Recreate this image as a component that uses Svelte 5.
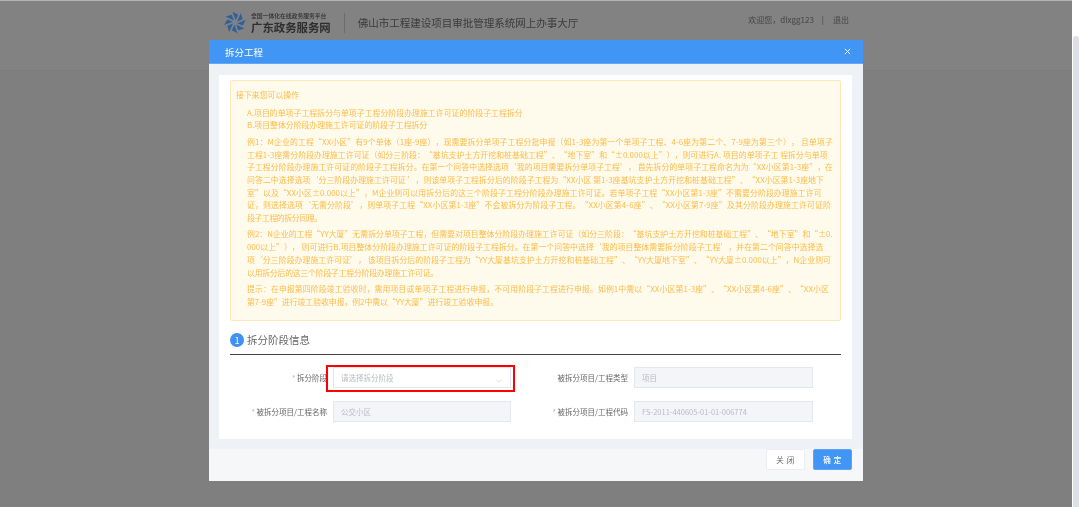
<script>
  const sections = [
    [["A.项目的单项子工程拆分与单项子工程分阶段办理施工许可证的阶段子工程拆分", 522.7], ["B.项目整体分阶段办理施工许可证的阶段子工程拆分", 427.3]],
    [
      ["例1：M企业的工程“XX小区”有9个单体（1座-9座），现需要拆分单项子工程分批申报（如1-3座为第一个单项子工程、4-6座为第二个、7-9座为第三个）， 且单项子", 833],
      ["工程1-3座需分阶段办理施工许可证（如分三阶段：“基坑支护土方开挖和桩基础工程”、“地下室”和“±0.000以上”），则可进行A. 项目的单项子工 程拆分与单项", 827.7],
      ["子工程分阶段办理施工许可证的阶段子工程拆分。在第一个问答中选择选项‘我的项目需要拆分单项子工程’， 首先拆分的单项子工程命名为为“XX小区第1-3座”，在", 833],
      ["问答二中选择选项‘分三阶段办理施工许可证 ’，则该单项子工程拆分后的阶段子工程为“XX小区 第1-3座基坑支护土方开挖和桩基础工程”、“XX小区第1-3座地下", 824],
      ["室”以及“XX小区±0.000以上”，M企业则可以用拆分后的这三个阶段子工程分阶段办理施工许可证。若单项子工程“XX小区第1-3座”不需要分阶段办理施工许可", 821.7],
      ["证，则选择选项‘无需分阶段’，则单项子工程“XX小区第1-3座”不会被拆分为阶段子工程。“XX小区第4-6座”、“XX小区第7-9座”及其分阶段办理施工许可证阶", 831],
      ["段子工程的拆分同理。", 321.7]
    ],
    [
      ["例2：N企业的工程“YY大厦”无需拆分单项子工程，但需要对项目整体分阶段办理施工许可证（如分三阶段：“基坑支护土方开挖和桩基础工程”、“地下室”和“±0.", 832.7],
      ["000以上”）， 则可进行B.项目整体分阶段办理施工许可证的阶段子工程拆分。在第一个问答中选择‘我的项目整体需要拆分阶段子工程’，并在第二个问答中选择选", 823.3],
      ["项‘分三阶段办理施工许可证’， 该项目拆分后的阶段子工程为“YY大厦基坑支护土方开挖和桩基础工程”、“YY大厦地下室”、“YY大厦±0.000以上”，N企业则可", 831],
      ["以用拆分后的这三个阶段子工程分阶段办理施工许可证。", 438]
    ],
    [
      ["提示：在申报第四阶段竣工验收时，需用项目或单项子工程进行申报，不可用阶段子工程进行申报。如例1中需以“XX小区第1-3座”、“XX小区第4-6座”、“XX小区", 829],
      ["第7-9座”进行竣工验收申报，例2中需以“YY大厦”进行竣工验收申报。", 498]
    ]
  ];
  const blades = [0, 45, 90, 135, 180, 225, 270, 315];

  // Text runs end where the source layout ended them: spread the small difference over the line.
  function fit(node, rightEdge) {
    const width = rightEdge - 247;
    const actual = node.getBoundingClientRect().width;
    node.style.letterSpacing = (width - actual) / node.textContent.length + "px";
  }
</script>

<div class="screen">
  <div class="page">
    <header class="topbar">
      <div class="brand">
        <svg class="logo" viewBox="0 0 24 24" width="22" height="23" aria-hidden="true">
          {#each blades as a}
            <path d="M12.7 9.6 9.3 .2 15.4 3.6Z" fill="#2e6199" transform="rotate({a} 12 12)" />
          {/each}
          <circle cx="12" cy="12" r="1.2" fill="#5d86b4" />
        </svg>
        <div class="brand-text">
          <span class="brand-sub">全国一体化在线政务服务平台</span>
          <span class="brand-main">广东政务服务网</span>
        </div>
        <i class="divider"></i>
        <span class="hall">佛山市工程建设项目审批管理系统网上办事大厅</span>
      </div>
      <div class="user">
        <span>欢迎您，dlxgg123</span><span class="sep">|</span><span>退出</span>
      </div>
    </header>
  </div>
  <aside class="track"><div class="thumb"></div></aside>

  <div class="modal">
    <div class="modal-head">
      <span>拆分工程</span>
      <svg viewBox="0 0 8 8" width="7" height="7" aria-hidden="true"><path d="M1 1 7 7M7 1 1 7" stroke="#fff" stroke-width="1.1" fill="none" /></svg>
    </div>
    <div class="modal-body">
      <div class="panel">
        <div class="notice">
          <p class="lead">接下来您可以操作</p>
          {#each sections as lines}
            <div class="para">
              {#each lines as [text, end]}<div class="line"><span use:fit={end}>{text}</span></div>{/each}
            </div>
          {/each}
        </div>

        <div class="section">
          <span class="num">1</span>
          <span class="section-title">拆分阶段信息</span>
        </div>

        <div class="form">
          <div class="field">
            <span class="label"><em>*</em>拆分阶段</span>
            <div class="control select">
              <span>请选择拆分阶段</span>
              <svg viewBox="0 0 8 5" width="6" height="4" aria-hidden="true"><path d="M.7.7 4 4 7.3.7" stroke="#c3c6cc" stroke-width=".8" fill="none" /></svg>
              <div class="mark"></div>
            </div>
          </div>
          <div class="field second">
            <span class="label">被拆分项目/工程类型</span>
            <div class="control off">项目</div>
          </div>
          <div class="field">
            <span class="label"><em>*</em>被拆分项目/工程名称</span>
            <div class="control off">公交小区</div>
          </div>
          <div class="field second">
            <span class="label"><em>*</em>被拆分项目/工程代码</span>
            <div class="control off">FS-2011-440605-01-01-006774</div>
          </div>
        </div>
      </div>
    </div>
    <div class="modal-foot">
      <button class="btn">关 闭</button>
      <button class="btn primary">确 定</button>
    </div>
  </div>
</div>

<style>
  :global(body) { margin: 0; background: #fff; }
  .screen {
    position: relative;
    display: flex;
    width: 1080px;
    height: 507px;
    overflow: hidden;
    font-family: "Noto Sans CJK SC", "Noto Sans", sans-serif;
    text-spacing-trim: space-all;
    filter: blur(.35px);
  }
  .page {
    width: 1072px;
    background: #7f7f7f;
    border-top: 1px solid #b4b4b4;
    box-sizing: border-box;
  }
  .topbar {
    height: 70px;
    box-sizing: border-box;
    background: #828282;
    border-bottom: 1px solid #7a7c7f;
    display: flex;
    align-items: flex-start;
    justify-content: space-between;
    padding: 10px 224px 0 224px;
    color: #3d3d3d;
  }
  .brand { display: flex; align-items: center; height: 23px; }
  .logo { flex: none; }
  .brand-text { display: flex; flex-direction: column; margin-left: 5px; color: #2e2e2e; }
  .brand-sub { font-size: 5.8px; line-height: 8px; font-weight: 500; white-space: nowrap; }
  .brand-main { font-size: 11.4px; line-height: 14px; font-weight: 700; white-space: nowrap; }
  .divider { width: 1px; height: 20px; background: #6c6c6c; margin: 0 13px 0 13px; }
  .hall { font-size: 10.5px; color: #3a3a3a; white-space: nowrap; }
  .user { display: flex; font-size: 8px; line-height: 18px; margin-right: -1px; white-space: nowrap; color: #444; }
  .sep { margin: 0 9px 0 8px; }

  .track { flex: 1; background: #fff; padding: 36px 1px 0 1px; }
  .thumb { height: 100%; border-radius: 3px 3px 0 0; background: #dde0e7; }

  .modal {
    position: absolute;
    left: 209px;
    top: 40px;
    width: 654px;
    height: 441px;
    display: flex;
    flex-direction: column;
    background: #f6f7f9;
  }
  .modal-head {
    height: 24px;
    flex: none;
    background: #4095f5;
    border-bottom: 1px solid #62a9f7;
    box-sizing: border-box;
    color: #fff;
    font-size: 9.5px;
    display: flex;
    align-items: center;
    justify-content: space-between;
    padding: 0 12px 0 16px;
  }
  .modal-body {
    height: 385px;
    flex: none;
    box-sizing: border-box;
    background: #eef1f5;
    padding: 11px 11px 10px 10px;
  }
  .panel { height: 364px; background: #fff; padding: 5px 11px 0; box-sizing: border-box; }
  .notice {
    height: 241px;
    box-sizing: border-box;
    background: #fffbec;
    border: 1px solid #fde8bb;
    border-radius: 2px;
    padding: 8px 5px 0;
    color: #fdbb48;
    font-size: 7.9px;
    line-height: 12.7px;
  }
  .lead { margin: 0 0 5px; }
  .para { margin: 0 0 3.7px 11px; }
  .line { white-space: nowrap; }

  .section {
    display: flex;
    align-items: flex-start;
    gap: 3px;
    height: 21px;
    padding-top: 12px;
    border-bottom: 1.5px solid #444;
  }
  .num {
    width: 14px;
    height: 14px;
    border-radius: 50%;
    background: #3f92f3;
    color: #fff;
    font-size: 8.5px;
    line-height: 14px;
    text-align: center;
  }
  .section-title { font-size: 10.5px; line-height: 14px; color: #666; }

  .form {
    display: grid;
    grid-template-columns: 292px 302px;
    row-gap: 12.5px;
    margin: 12px 0 0 -11px;
    font-size: 7.5px;
    color: #666;
  }
  .field { display: flex; align-items: center; }
  .label { width: 108px; margin-right: 6px; text-align: right; white-space: nowrap; flex: none; }
  .label em { color: #f89898; font-style: normal; margin-right: 1.5px; }
  .field.second .label { width: 117px; }
  .control {
    position: relative;
    width: 178px;
    height: 21px;
    box-sizing: border-box;
    padding: 0 7px;
    display: flex;
    align-items: center;
    color: #b8bbc3;
    border: 1px solid #e4e7ed;
    white-space: nowrap;
  }
  .field.second .control { width: 179px; }
  .off { background: #f4f5f9; }
  .select { background: #fff; justify-content: space-between; }
  .select svg { margin: 7px 1px 0 0; }
  .mark {
    position: absolute;
    left: -8px;
    right: -5px;
    top: -3px;
    bottom: -5px;
    border: 2px solid #f00;
  }
  .modal-foot {
    flex: 1;
    display: flex;
    justify-content: flex-end;
    align-items: flex-start;
    gap: 8px;
    padding-right: 11px;
  }
  .btn {
    width: 39px;
    height: 21px;
    padding: 0;
    font: 7.5px "Noto Sans CJK SC", sans-serif;
    letter-spacing: .6px;
    color: #666;
    background: #fff;
    border: 1px solid #ebedf0;
    border-radius: 2px;
  }
  .primary { background: #4095f5; border-color: #5aa5f7; color: #fff; font-weight: 500; }
</style>
